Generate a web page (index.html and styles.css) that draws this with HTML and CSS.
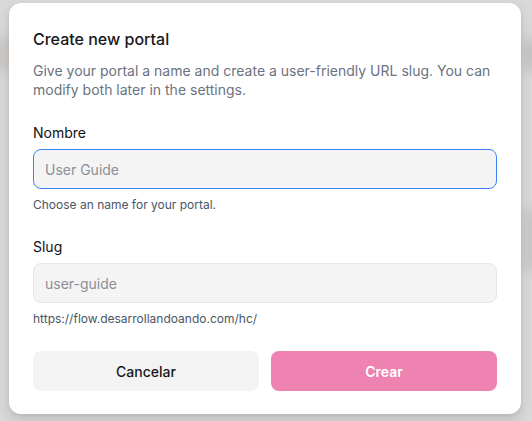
FILE: index.html
```html
<!DOCTYPE html>
<html lang="en">
<head>
<meta charset="utf-8">
<title>Create new portal</title>
<link rel="stylesheet" href="styles.css">
</head>
<body>
<div class="backdrop">
  <div class="blob b1"></div>
  <div class="blob b2"></div>
  <div class="blob b3"></div>
  <div class="blob b4"></div>
</div>
<div class="stage">
  <div class="modal">
    <h2 class="title">Create new portal</h2>
    <p class="desc">Give your portal a name and create a user-friendly URL slug. You can modify both later in the settings.</p>
    <div class="field">
      <label class="label">Nombre</label>
      <div class="input focused"><span class="ph">User Guide</span></div>
      <p class="help">Choose an name for your portal.</p>
    </div>
    <div class="field">
      <label class="label">Slug</label>
      <div class="input"><span class="ph">user-guide</span></div>
      <p class="help">https://flow.desarrollandoando.com/hc/</p>
    </div>
    <div class="actions">
      <button class="btn cancel">Cancelar</button>
      <button class="btn create">Crear</button>
    </div>
  </div>
</div>
</body>
</html>
```

FILE: styles.css
```css
* { box-sizing: border-box; }
html, body { margin: 0; padding: 0; }
body {
  width: 532px;
  height: 421px;
  overflow: hidden;
  background: #d9d9d9;
  font-family: Inter, "Noto Sans", "Liberation Sans", sans-serif;
  position: relative;
}
.backdrop {
  position: absolute;
  inset: 0;
  filter: blur(6px);
}
.blob { position: absolute; background: #c4c4c4; border-radius: 4px; }
.b1 { left: -10px; top: 40px; width: 30px; height: 30px; background: #c8c8c8; }
.b2 { left: 5px; top: 48px; width: 10px; height: 14px; background: #dcccc0; }
.b3 { left: 522px; top: 40px; width: 20px; height: 30px; background: #c4c4c4; }
.b4 { left: 522px; top: 210px; width: 20px; height: 60px; background: #c8c8c8; }
.stage {
  position: relative;
  padding: 3px 11px 7px 9px;
}
.modal {
  width: 512px;
  height: 411px;
  background: #ffffff;
  border-radius: 12px;
  padding: 24px 24px 24px 24px;
  box-shadow: 0 6px 14px rgba(0,0,0,0.12), 0 2px 4px rgba(0,0,0,0.06);
  display: flex;
  flex-direction: column;
}
.title {
  margin: 0;
  font-size: 16px;
  line-height: 24px;
  font-weight: 500;
  color: #18181b;
}
.desc {
  margin: 10px 0 0;
  font-size: 14px;
  line-height: 19px;
  color: #6b7280;
}
.field {
  margin-top: 24px;
  display: flex;
  flex-direction: column;
}
.field + .field { margin-top: 24px; }
.label {
  font-size: 14px;
  line-height: 20px;
  font-weight: 400;
  color: #111111;
}
.input {
  margin-top: 6px;
  height: 40px;
  background: #f4f4f4;
  border: 1px solid #e6e6e6;
  border-radius: 8px;
  display: flex;
  align-items: center;
  padding: 0 11px;
}
.input.focused {
  border: 1.5px solid #3b82f6;
}
.ph {
  font-size: 14px;
  color: #8b8f97;
}
.help {
  margin: 8px 0 0;
  font-size: 12px;
  line-height: 16px;
  color: #4b5563;
}
.actions {
  margin-top: 24px;
  display: grid;
  grid-template-columns: 1fr 1fr;
  gap: 12px;
}
.btn {
  height: 40px;
  border: none;
  border-radius: 8px;
  font-family: inherit;
  font-size: 14px;
  font-weight: 500;
}
.cancel { background: #f3f3f3; color: #18181b; }
.create { background: #ee82b0; color: #ffffff; font-weight: 600; }
```
